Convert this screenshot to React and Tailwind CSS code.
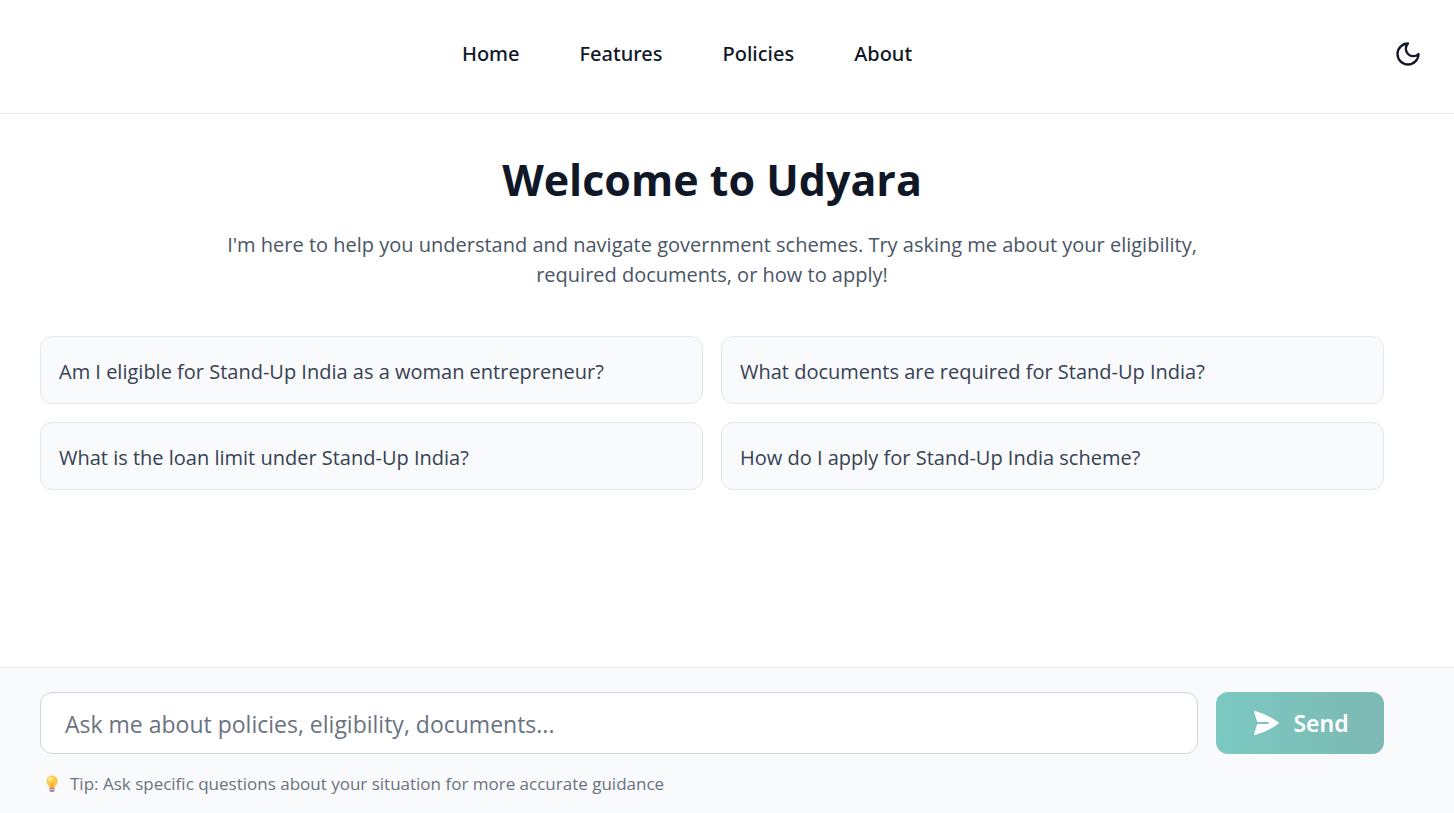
import { useState } from "react"
import { HiPaperAirplane } from "react-icons/hi2"

const navLinks = ["Home", "Features", "Policies", "About"]

const suggestions = [
  "Am I eligible for Stand-Up India as a woman entrepreneur?",
  "What documents are required for Stand-Up India?",
  "What is the loan limit under Stand-Up India?",
  "How do I apply for Stand-Up India scheme?",
]

function MoonIcon() {
  return (
    <svg
      viewBox="0 0 24 24"
      className="size-7"
      fill="none"
      stroke="currentColor"
      strokeWidth="2"
      strokeLinecap="round"
      strokeLinejoin="round"
      aria-hidden="true"
    >
      <path d="M12 3a6 6 0 0 0 9 9 9 9 0 1 1-9-9Z" />
    </svg>
  )
}

function BulbIcon() {
  return (
    <svg viewBox="0 0 24 36" className="h-[18px] w-3" aria-hidden="true">
      <defs>
        <radialGradient id="bulb" cx="0.4" cy="0.3" r="0.7">
          <stop offset="0" stopColor="#ffe36b" />
          <stop offset="1" stopColor="#ffb42e" />
        </radialGradient>
      </defs>
      <path d="M12 1C5.5 1 1 5.8 1 11.8c0 4.2 2.3 6.8 4.2 9.2C6.5 22.7 7 24 7 26h10c0-2 .5-3.3 1.8-5 1.9-2.4 4.2-5 4.2-9.2C23 5.8 18.5 1 12 1Z" fill="url(#bulb)" />
      <path d="M9 14l2 3v9M15 14l-2 3v9" fill="none" stroke="#f28f1d" strokeWidth="1.2" />
      <path d="M7 26h10v5a3 3 0 0 1-3 3h-4a3 3 0 0 1-3-3Z" fill="#a58bb8" />
      <path d="M7 29h10" stroke="#d8cbe3" strokeWidth="1.5" />
      <ellipse cx="8" cy="8" rx="3" ry="3.5" fill="#fff3a8" />
    </svg>
  )
}

export default function App() {
  const [message, setMessage] = useState("")

  return (
    <div className="flex min-h-screen flex-col bg-white font-['Open_Sans',sans-serif]">
      <header className="grid grid-cols-[1fr_auto_1fr] items-center border-b border-gray-200 px-7 pt-[34px] pb-[39px]">
        <nav className="col-start-2 mr-20 flex gap-15 font-['Noto_Sans',sans-serif] text-xl font-medium text-gray-900">
          {navLinks.map((link) => (
            <a key={link} href="#" className="leading-10 hover:text-teal-600">
              {link}
            </a>
          ))}
        </nav>
        <button aria-label="Toggle dark mode" className="justify-self-end p-1 text-gray-900">
          <MoonIcon />
        </button>
      </header>

      <main className="flex-1 pt-9 pr-[70px] pl-10">
        <div className="text-center">
          <h1 className="text-[43px] leading-[60px] font-bold text-gray-900">Welcome to Udyara</h1>
          <p className="mx-auto mt-5 max-w-[1010px] text-xl leading-[30px] text-gray-600">
            I'm here to help you understand and navigate government schemes. Try asking me about your eligibility,
            required documents, or how to apply!
          </p>
        </div>

        <div className="mt-[46px] grid grid-cols-2 gap-[18px]">
          {suggestions.map((question) => (
            <button
              key={question}
              onClick={() => setMessage(question)}
              className="rounded-xl border border-gray-200 bg-gray-50 px-[18px] pt-5 pb-4 text-left text-xl leading-[30px] text-gray-700 hover:bg-gray-100"
            >
              {question}
            </button>
          ))}
        </div>
      </main>

      <footer className="border-t border-gray-200 bg-gray-50 pt-6 pr-[70px] pb-4 pl-10">
        <form className="flex gap-[18px]" onSubmit={(e) => e.preventDefault()}>
          <input
            type="text"
            aria-label="Your question"
            placeholder="Ask me about policies, eligibility, documents..."
            value={message}
            onChange={(e) => setMessage(e.target.value)}
            className="h-[62px] min-w-0 flex-1 rounded-xl border border-gray-300 bg-white px-6 pt-0.5 text-[23px] text-gray-900 placeholder:text-gray-500 focus:outline-none focus:ring-2 focus:ring-teal-500"
          />
          <button
            type="submit"
            className="flex h-[62px] w-42 items-center justify-center gap-3 rounded-xl bg-linear-to-r from-[#7bc9c1] to-[#7db8b4] font-['Noto_Sans',sans-serif] text-[23px] font-semibold text-white"
          >
            <HiPaperAirplane className="size-[30px]" />
            Send
          </button>
        </form>
        <p className="mt-4 flex items-center gap-3 pl-1.5 text-[17px] leading-[27px] text-gray-500">
          <BulbIcon />
          Tip: Ask specific questions about your situation for more accurate guidance
        </p>
      </footer>
    </div>
  )
}
